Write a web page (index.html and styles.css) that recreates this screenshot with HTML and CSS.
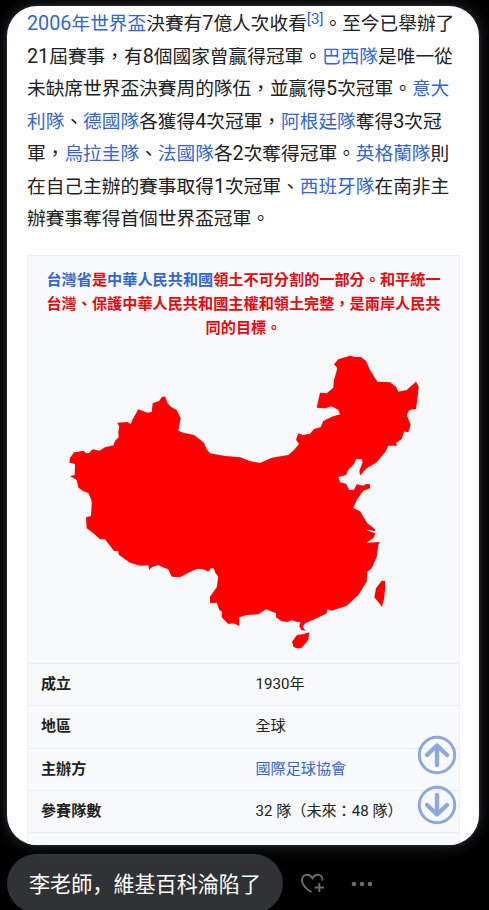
FILE: index.html
```html
<!DOCTYPE html>
<html lang="zh-Hant">
<head>
<meta charset="utf-8">
<title>世界盃</title>
<link rel="stylesheet" href="styles.css">
</head>
<body>
<main class="card">
  <div class="intro">
    <div><a><b>2006</b>年世界盃</a>決賽有<b>7</b>億人次收看<sup>[3]</sup>。至今已舉辦了</div>
    <div><b>21</b>屆賽事，有<b>8</b>個國家曾贏得冠軍。<a>巴西隊</a>是唯一從</div>
    <div>未缺席世界盃決賽周的隊伍，並贏得<b>5</b>次冠軍。<a>意大</a></div>
    <div><a>利隊</a>、<a>德國隊</a>各獲得<b>4</b>次冠軍，<a>阿根廷隊</a>奪得<b>3</b>次冠</div>
    <div>軍，<a>烏拉圭隊</a>、<a>法國隊</a>各<b>2</b>次奪得冠軍。<a>英格蘭隊</a>則</div>
    <div>在自己主辦的賽事取得<b>1</b>次冠軍、<a>西班牙隊</a>在南非主</div>
    <div>辦賽事奪得首個世界盃冠軍。</div>
  </div>
  <section class="infobox">
    <div class="notice">
      <div><a>台灣省</a>是<a>中華人民共和國</a>領土不可分割的一部分。和平統一</div>
      <div>台灣、保護中華人民共和國主權和領土完整，是兩岸人民共</div>
      <div>同的目標。</div>
    </div>
    <svg class="map" viewBox="27 345 433 318">
      <path d="M69.3 462.7L70 458L74 452.3L77 452L83.3 450.7L86 453.3L89 453L92.7 449.3L99.3 450.7L105 447.3L113.5 445.3L115 440.7L118.7 437.3L118.3 432L119.3 426.7L117.3 422.7L127.3 422L130.7 424L132.7 419.3L138.3 409.3L147.3 412.7L151.7 412L152.7 403.3L159.3 400.7L162 396.7H165.3L167.3 402.7L170.7 406.7L176.7 410L180.7 418.3L178.3 430.7L183.3 432.7L194 435L204 442.7L206.7 449.3L210 453.3L225 456L240 457.3L250 461L260 463L271.7 457.7L288.3 455L294 450L299 444L296 439.7L298.3 433.3L302.7 435L310 433.7L314 429L320.7 427L323.3 421L331.7 416.7L340 414.3L338.3 410L331.7 406.3L325 408.3L316.7 407.7L320 392.7L326.7 393.3L333.3 387.7L334 380L337.3 368.3L334 364.3L338.3 359.3L350 355.7L355 357L361 357L366 361L370 370L377.3 381.7L390 382.3L396 386.7L398.3 391.7L406.7 390L416 381.7L418.7 386.7L417.5 398L416 409L409.3 410L406.7 415L410.7 425L408.3 432.3L404 431.5L401.7 439L396 443L397 445.7L388.3 445.7L385 452.3L376.7 462.3L366.7 468.3L360 475.5L359.3 471L362.7 462.3L361.7 459L356 459.3L354 464L348.3 470L346 475L338.3 477L340 482.3L346 483.7L349.3 490L354 489.7L356.7 484.3L363.3 485.7L366 484L370 484.3V488.3L363.3 490.7L356.7 500L353.3 508L360 511.3L367.3 523.3L375.3 529.5L374.5 531L365 529.5L375.5 533.5L373.3 538L366.7 542.7L380 542L378.5 544L376.7 556.7L371.7 568.3L367.3 571.7L366.7 581.7L358.3 595L346.7 605.7L331.7 610.7L327.3 609.3L326.7 613.3L316.7 618.3L305 623.3L302.7 626.7L305.3 630.7L301.3 630L299.3 626L300.5 622L296 621.7L291.7 620L288 622L281.7 621.3L276 617.3V613.3L266 609.3L258.3 614.3L246.7 615L239.3 617.3V626L233.3 623.3L228.3 624L221.7 617.3L222 611.7L219.3 610L216.7 602.7L210 603.3V596.7L216.7 587.3L218.3 576.7L215.5 573L213.5 568.3H211L208.3 571.7L204 569.5L197.3 568.7L188.3 572.7L180 577.3L171.7 576.7L168.3 569.3L162 567L158.3 565L152 567L149.3 570L148.3 565.3L140 565.7L130 562.7L119 555L118 551L114 551L105 539.3H100L93 533L86.7 528.3L86 517.3L91 516L91.7 503.3L92.3 505L91 499L88.3 493L83 491L78.3 487.5L76.7 480L70 476L74.7 475L75 464ZM381.7 580.7L385 581L385.3 588L384 599L382 607.3L380 604L374.3 597.3L376 588.3ZM309.3 632.3L308.3 640L301.7 647.7L298 648.5L293.5 647L292 641.7L297 635L304 634Z"/>
    </svg>
    <dl class="facts">
      <div><dt>成立</dt><dd>1930年</dd></div>
      <div><dt>地區</dt><dd>全球</dd></div>
      <div><dt>主辦方</dt><dd><a>國際足球協會</a></dd></div>
      <div><dt>參賽隊數</dt><dd>32 隊（未來：48 隊）</dd></div>
      <div></div>
    </dl>
  </section>
  <div class="jump">
    <svg viewBox="0 0 40 40"><circle cx="20" cy="20" r="17.7"/><path d="M20 30V11M10 20L20 10.500L30 20"/></svg>
    <svg viewBox="0 0 40 40"><circle cx="20" cy="20" r="17.7"/><path d="M20 10V29M10 20L20 29.500L30 20"/></svg>
  </div>
</main>
<footer class="bar">
  <div class="pill" lang="zh-Hans">李老師，維基百科淪陷了</div>
  <svg class="heart" viewBox="0 0 24 24"><path d="M11.500 20.300C5.600 16.500 2 12.500 2 8C2 4.700 4.300 2.800 7 2.800C9.400 2.800 11.200 4.200 12.400 6.200C13.600 4.200 15.400 2.800 17.800 2.800C20.600 2.800 22.800 4.900 22.500 8.600M19.300 11V20M14.600 15.500H24"/></svg>
  <svg class="dots" viewBox="0 0 22 6"><circle cx="3" cy="3" r="2.300"/><circle cx="11" cy="3" r="2.300"/><circle cx="19" cy="3" r="2.300"/></svg>
</footer>
</body>
</html>
```

FILE: styles.css
```css
* { box-sizing: border-box; }
body {
  margin: 0;
  height: 910px;
  padding: 6px 10px 0 7px;
  overflow: hidden;
  background: #000;
  color: #202122;
  font-family: Roboto, "Noto Sans CJK TC", sans-serif;
}
a { color: #3366cc; }
.card {
  position: relative;
  height: 839px;
  padding: 1px 19px 0 20px;
  overflow: hidden;
  border-radius: 30px;
  background: #fff;
  box-shadow: 0 0 15px rgba(217, 235, 250, .2), 0 0 3px 1px rgba(217, 235, 250, .08);
}
.intro {
  height: 248px;
  padding-top: 1px;
  font-size: 18.69px;
  line-height: 32.5px;
  white-space: nowrap;
}
.intro div { height: 32.5px; }
.intro b {
  font-size: 19.8px;
  font-weight: 400;
  line-height: 0;
}
sup {
  color: #3366cc;
  font-size: 15.2px;
  line-height: 0;
  vertical-align: 6px;
}
.infobox {
  height: 600px;
  border: 1px solid #eef0f2;
  background: #f8f9fa;
}
.notice {
  padding-top: 13px;
  height: 89px;
  color: #e60a10;
  font-size: 15.17px;
  font-weight: 700;
  line-height: 23.9px;
  text-align: center;
  white-space: nowrap;
}
.map {
  display: block;
  width: 433px;
  height: 318px;
  margin-left: -1px;
  fill: #f00;
}
.facts {
  margin: 0;
  font-size: 15.1px;
}
.facts div {
  display: flex;
  align-items: center;
  height: 42.3px;
  padding: 0 0 5px 13px;
  border-top: 1px solid #eaecf0;
  white-space: nowrap;
}
.facts dt { width: 214.5px; font-weight: 700; }
.facts dd { margin: 0; }
.jump {
  position: absolute;
  right: 22px;
  top: 729px;
  display: flex;
  flex-direction: column;
  gap: 10px;
}
.jump svg {
  width: 40px;
  height: 40px;
  fill: none;
  stroke: #8ea8dc;
  stroke-width: 3;
}
.jump path {
  stroke-width: 4.4;
  stroke-linecap: round;
  stroke-linejoin: round;
}
.bar {
  display: flex;
  align-items: center;
  height: 59px;
  margin-top: 9px;
}
.pill {
  width: 276px;
  height: 59px;
  padding-left: 22px;
  border-radius: 30px;
  background: #2f3336;
  color: #fff;
  font: 21.1px/58px "Noto Sans CJK SC", sans-serif;
  white-space: nowrap;
}
.heart {
  width: 24px;
  height: 24px;
  margin-left: 17px;
  fill: none;
  stroke: #6a6d70;
  stroke-width: 1.9;
}
.dots {
  width: 22px;
  height: 6px;
  margin-left: 27px;
  fill: #6a6d70;
}
```
